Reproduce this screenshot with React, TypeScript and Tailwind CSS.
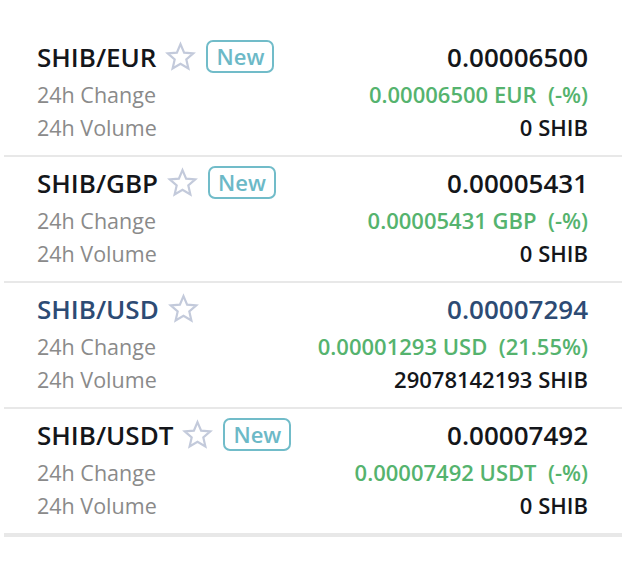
import React from "react";

type Pair = {
  name: string;
  price: string;
  change: string;
  volume: string;
  isNew: boolean;
  active?: boolean;
};

const pairs: Pair[] = [
  { name: "SHIB/EUR", price: "0.00006500", change: "0.00006500 EUR  (-%)", volume: "0 SHIB", isNew: true },
  { name: "SHIB/GBP", price: "0.00005431", change: "0.00005431 GBP  (-%)", volume: "0 SHIB", isNew: true },
  { name: "SHIB/USD", price: "0.00007294", change: "0.00001293 USD  (21.55%)", volume: "29078142193 SHIB", isNew: false, active: true },
  { name: "SHIB/USDT", price: "0.00007492", change: "0.00007492 USDT  (-%)", volume: "0 SHIB", isNew: true },
];

function Star() {
  return (
    <svg width="31" height="31" viewBox="0 0 24 24" fill="none" stroke="#c3cadb" strokeWidth="1.7" strokeLinejoin="miter">
      <path d="M12 2.4l2.8 6.6 7.1.6-5.4 4.7 1.6 7-6.1-3.7-6.1 3.7 1.6-7-5.4-4.7 7.1-.6z" />
    </svg>
  );
}

function Row({ p, last }: { p: Pair; last: boolean }) {
  const titleColor = p.active ? "text-[#2d4b74]" : "text-[#14161a]";
  return (
    <div className={last ? "border-b-[4px] border-[#e8e8e8]" : "border-b-2 border-[#e8e8e8]"}>
      <div className="flex justify-between pl-[33px] pr-[34px] pt-[7px] pb-[11px]">
        <div className="flex flex-col">
          <div className="flex items-center h-[40px] pb-[2px]">
            <span className={`text-[26px] font-semibold leading-none ${titleColor}`}>{p.name}</span>
            <span className="ml-[9px] mt-[-2px]"><Star /></span>
            {p.isNew && (
              <span className="ml-[10px] mt-[-2px] border-2 border-[#71bcc9] rounded-[7px] px-[8px] h-[33px] flex items-center text-[22px] font-semibold text-[#6cb9c7]">
                New
              </span>
            )}
          </div>
          <div className="text-[21.5px] text-[#8a8a8a] leading-[33px]">24h Change</div>
          <div className="text-[21.5px] text-[#8a8a8a] leading-[33px]">24h Volume</div>
        </div>
        <div className="flex flex-col items-end">
          <div className="flex items-center h-[40px] pb-[2px]">
            <span className={`text-[26px] font-semibold leading-none ${titleColor}`}>{p.price}</span>
          </div>
          <div className="text-[22px] font-semibold text-[#55b36e] leading-[33px] whitespace-pre">{p.change}</div>
          <div className="text-[22px] font-semibold text-[#14161a] leading-[33px]">{p.volume}</div>
        </div>
      </div>
    </div>
  );
}

export default function App() {
  return (
    <div className="w-[626px] h-[572px] bg-white pl-[4px] pr-[4px] pt-[31px]" style={{ fontFamily: '"Open Sans", sans-serif' }}>
      {pairs.map((p, i) => (
        <Row key={p.name} p={p} last={i === pairs.length - 1} />
      ))}
    </div>
  );
}
